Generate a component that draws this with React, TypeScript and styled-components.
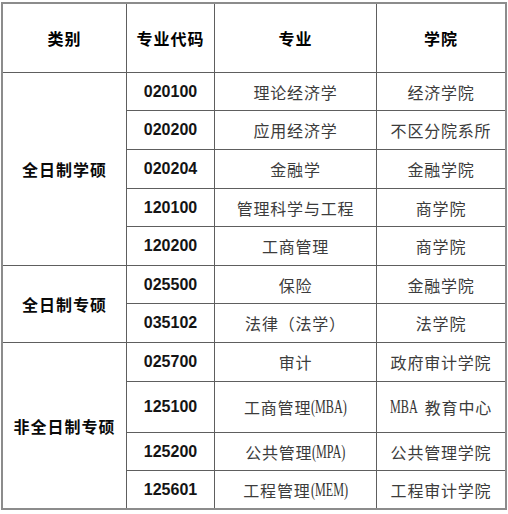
import React, { useLayoutEffect, useRef, useState } from "react";
import styled, { createGlobalStyle } from "styled-components";

const GlobalStyle = createGlobalStyle`
  html, body { margin: 0; padding: 0; background: #ffffff; }
  body { font-family: "Noto Sans CJK SC", "Noto Sans", sans-serif; }
`;

type Row = [string, string, string];
interface Group { label: string; rows: Row[] }

const groups: Group[] = [
  {
    label: "全日制学硕",
    rows: [
      ["020100", "理论经济学", "经济学院"],
      ["020200", "应用经济学", "不区分院系所"],
      ["020204", "金融学", "金融学院"],
      ["120100", "管理科学与工程", "商学院"],
      ["120200", "工商管理", "商学院"],
    ],
  },
  {
    label: "全日制专硕",
    rows: [
      ["025500", "保险", "金融学院"],
      ["035102", "法律（法学）", "法学院"],
    ],
  },
  {
    label: "非全日制专硕",
    rows: [
      ["025700", "审计", "政府审计学院"],
      ["125100", "工商管理(MBA)", "MBA 教育中心"],
      ["125200", "公共管理(MPA)", "公共管理学院"],
      ["125601", "工程管理(MEM)", "工程审计学院"],
    ],
  },
];

const rowHeights = [37, 38, 38, 37, 38, 37, 38, 38, 50, 37, 37];
const SCALE = 0.64;

const Page = styled.div`
  padding: 2px 0 0 1px;
`;

const Grid = styled.div<{ $rows: string }>`
  display: grid;
  width: 502px;
  grid-template-columns: 123px 87px 161px 128px;
  grid-template-rows: ${(p) => p.$rows};
  gap: 1px;
  background: #5e5e5e;
  border: 2px solid #8c8c8c;
`;

const Cell = styled.div`
  background: #ffffff;
  display: flex;
  align-items: center;
  justify-content: center;
  white-space: nowrap;
`;

const HeaderCell = styled(Cell)`
  font-family: "Noto Sans CJK SC", sans-serif;
  font-weight: 700;
  font-size: 16px;
  letter-spacing: 1px;
  color: #000000;
`;

const CategoryCell = styled(Cell)<{ $span: number }>`
  grid-column: 1;
  grid-row: span ${(p) => p.$span};
  font-family: "Noto Sans CJK SC", sans-serif;
  font-weight: 700;
  font-size: 16px;
  letter-spacing: 1px;
  color: #0a0a0a;
`;

const CodeCell = styled(Cell)`
  font-family: "Liberation Sans", Arial, sans-serif;
  font-weight: 700;
  font-size: 16px;
  color: #141414;
`;

const TextCell = styled(Cell)`
  font-family: "Noto Sans CJK SC", sans-serif;
  font-weight: 400;
  font-size: 16px;
  letter-spacing: 0.8px;
  color: #3c3c3c;
`;

const LatinBox = styled.span`
  display: inline-block;
  font-family: "Liberation Serif", "Times New Roman", serif;
  font-size: 19px;
  letter-spacing: 0;
  color: #333333;
  transform: scaleX(${SCALE});
  transform-origin: left center;
`;

function Latin({ text, gap }: { text: string; gap: number }) {
  const ref = useRef<HTMLSpanElement>(null);
  const [w, setW] = useState(0);
  useLayoutEffect(() => {
    const measure = () => {
      if (ref.current) setW(ref.current.offsetWidth);
    };
    measure();
    if (document.fonts && document.fonts.ready) document.fonts.ready.then(measure);
  }, [text]);
  return (
    <LatinBox ref={ref} style={w ? { marginRight: gap - w * (1 - SCALE) } : undefined}>
      {text}
    </LatinBox>
  );
}

const renderText = (t: string) => {
  const parts = t.split(/([A-Za-z()]+ ?)/).filter((p) => p.length > 0);
  return parts.map((part, i) => {
    const m = part.match(/^([A-Za-z()]+)( ?)$/);
    if (m) return <Latin key={i} text={m[1]} gap={m[2] ? 7 : 0} />;
    return <React.Fragment key={i}>{part}</React.Fragment>;
  });
};

export default function App() {
  const rows = ["68px", ...rowHeights.map((h) => `${h}px`)].join(" ");
  return (
    <>
      <GlobalStyle />
      <Page>
        <Grid $rows={rows}>
          <HeaderCell>类别</HeaderCell>
          <HeaderCell>专业代码</HeaderCell>
          <HeaderCell>专业</HeaderCell>
          <HeaderCell>学院</HeaderCell>
          {groups.map((g) => (
            <React.Fragment key={g.label}>
              <CategoryCell $span={g.rows.length}>{g.label}</CategoryCell>
              {g.rows.map(([code, major, school]) => (
                <React.Fragment key={code}>
                  <CodeCell>{code}</CodeCell>
                  <TextCell>{renderText(major)}</TextCell>
                  <TextCell>{renderText(school)}</TextCell>
                </React.Fragment>
              ))}
            </React.Fragment>
          ))}
        </Grid>
      </Page>
    </>
  );
}
